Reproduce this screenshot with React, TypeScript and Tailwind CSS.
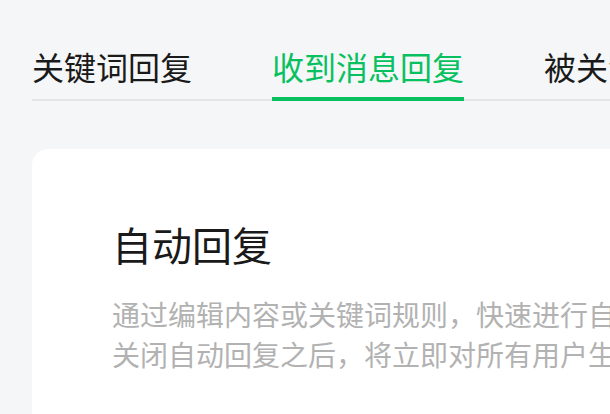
const tabs = [
  { label: '关键词回复', active: false },
  { label: '收到消息回复', active: true },
  { label: '被关注回复', active: false },
];

export default function App() {
  return (
    <div
      className="w-[610px] h-[414px] overflow-hidden bg-[#f5f6f7]"
      style={{ fontFamily: '"Noto Sans CJK SC", "Noto Sans", sans-serif' }}
    >
      <div className="w-[1200px] pl-8 pt-[50px]">
        {/* Tabs */}
        <div className="flex gap-20 border-b-2 border-[#e4e5e7]">
          {tabs.map(t => (
            <div
              key={t.label}
              className={`-mb-[2px] pb-[15px] text-[32px] leading-8 whitespace-nowrap border-b-4 ${t.active ? 'text-[#07c160] border-[#07c160]' : 'text-[#1a1a1a] border-transparent'}`}
            >
              {t.label}
            </div>
          ))}
        </div>

        {/* Card */}
        <div className="mt-12 h-[400px] rounded-2xl bg-white pl-20 pt-[75px]">
          <h1 className="text-[40px] leading-10 text-[#1a1a1a]">自动回复</h1>
          <div className="mt-[30px] text-[28px] leading-10 text-[#b2b2b2] whitespace-nowrap">
            <p>通过编辑内容或关键词规则，快速进行自动回复设置。如具备开发能力，可更灵活地使用该功能。</p>
            <p>关闭自动回复之后，将立即对所有用户生效。</p>
          </div>
        </div>
      </div>
    </div>
  );
}
